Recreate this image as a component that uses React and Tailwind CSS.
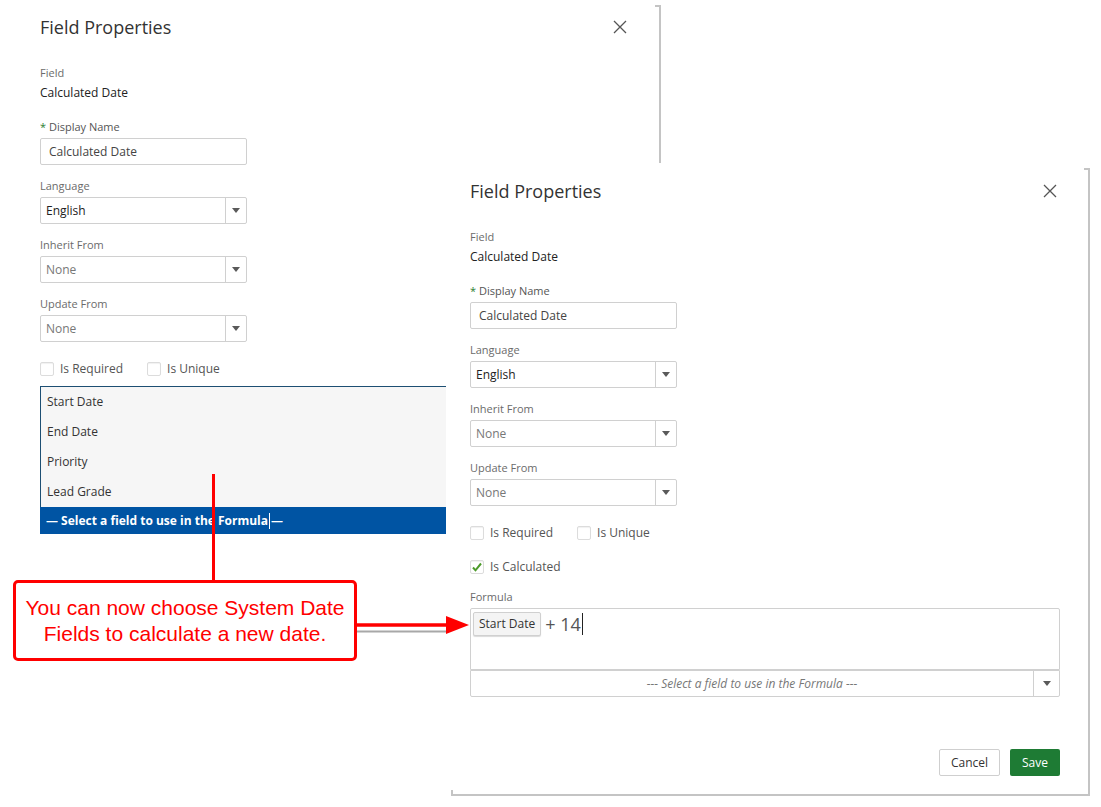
import React from "react";

/* ---------- small drawings ---------- */
const Caret = () => (
  <svg width="8" height="5" viewBox="0 0 8 5">
    <path d="M0 0h8L4 5z" fill="#5a5a5a" />
  </svg>
);

const CloseX = () => (
  <svg width="14" height="14" viewBox="0 0 14 14">
    <path d="M1 1l12 12M13 1L1 13" stroke="#555" strokeWidth="1.3" fill="none" />
  </svg>
);

const Tick = () => (
  <svg width="12" height="12" viewBox="0 0 12 12">
    <path d="M2 6.5l2.5 2.8L10 2.5" stroke="#4c9a2a" strokeWidth="2" fill="none" />
  </svg>
);

/* ---------- form pieces ---------- */
const Label = ({ children, className = "" }) => (
  <div className={`text-[11px] leading-4 text-[#6b6b6b] ${className}`}>{children}</div>
);

const Select = ({ value, muted }) => (
  <div className="mt-[3px] flex h-[27px] w-[207px] rounded-[2px] border border-[#d0d0d0] bg-white">
    <div className={`flex flex-1 items-center pl-[5px] text-[12px] ${muted ? "text-[#777]" : "text-[#222]"}`}>
      {value}
    </div>
    <div className="flex w-[21px] items-center justify-center border-l border-[#d0d0d0]">
      <Caret />
    </div>
  </div>
);

const Check = ({ label, checked, className = "" }) => (
  <div className={`flex h-[18px] items-center ${className}`}>
    <span className="flex h-[14px] w-[14px] items-center justify-center rounded-[2px] border border-[#dcdcdc] bg-white shadow-[inset_0_1px_1px_rgba(0,0,0,0.06)]">
      {checked && <Tick />}
    </span>
    <span className="ml-[6px] text-[12px] text-[#555]">{label}</span>
  </div>
);

/* shared top part of both panels */
const FormTop = () => (
  <>
    <div className="flex w-[587px] items-center justify-between">
      <h2 className="text-[18px] leading-6 text-[#333]">Field Properties</h2>
      <CloseX />
    </div>

    <Label className="mt-[26px]">Field</Label>
    <div className="mt-[3px] text-[12px] leading-[18px] text-[#222]">Calculated Date</div>

    <Label className="mt-[17px] text-[#555]">
      <span className="text-[#2e7d32]">*</span> Display Name
    </Label>
    <div className="mt-[3px] flex h-[27px] w-[207px] items-center rounded-[2px] border border-[#d0d0d0] pl-[8px] text-[12px] text-[#444]">
      Calculated Date
    </div>

    <Label className="mt-[13px]">Language</Label>
    <Select value="English" />
    <Label className="mt-[13px]">Inherit From</Label>
    <Select value="None" muted />
    <Label className="mt-[13px]">Update From</Label>
    <Select value="None" muted />

    <div className="mt-[18px] flex gap-[24px]">
      <Check label="Is Required" />
      <Check label="Is Unique" />
    </div>
  </>
);

/* ---------- page ---------- */
export default function App() {
  return (
    <div className="relative h-[807px] w-[1101px] overflow-hidden bg-white font-['Open_Sans',sans-serif]">
      {/* first screenshot: field list open */}
      <div className="relative w-[661px] pl-[40px] pt-[15px]">
        <span className="absolute left-[659px] top-[5px] h-[158px] w-[2px] bg-[#c4c4c4]" />
        <span className="absolute left-[655px] top-[5px] h-[2px] w-[5px] bg-[#c4c4c4]" />

        <FormTop />

        <div className="mt-[8px] w-[440px] border-l border-t border-[#1d4f73] bg-[#f6f6f6]">
          {["Start Date", "End Date", "Priority", "Lead Grade"].map((f) => (
            <div key={f} className="flex h-[30px] items-center pl-[6px] text-[12px] text-[#333]">
              {f}
            </div>
          ))}
        </div>
        <div className="flex h-[27px] w-[440px] items-center bg-[#0054a3] pl-[6px] text-[12px] font-bold text-white">
          — Select a field to use in the Formula
          <span className="mx-[1px] inline-block h-[16px] w-[1px] bg-white" />—
        </div>
      </div>

      {/* second screenshot: formula filled in */}
      <div className="absolute left-[446px] top-[165px] h-[631px] w-[644px] bg-white pl-[24px] pt-[14px]">
        <span className="absolute right-0 top-[3px] h-[628px] w-[2px] bg-[#c4c4c4]" />
        <span className="absolute right-[2px] top-[3px] h-[2px] w-[4px] bg-[#c4c4c4]" />
        <span className="absolute bottom-0 left-[5px] right-0 h-[2px] bg-[#c4c4c4]" />
        <span className="absolute bottom-0 left-[5px] h-[6px] w-[2px] bg-[#c4c4c4]" />

        <FormTop />

        <Check label="Is Calculated" checked className="mt-[16px]" />

        <Label className="mt-[13px]">Formula</Label>
        <div className="mt-[3px] flex h-[62px] w-[590px] items-start rounded-t-[2px] border border-[#d0d0d0] pl-[2px] pt-[3px]">
          <span className="flex h-[24px] items-center rounded-[2px] border border-[#d0d0d0] bg-[#f4f4f4] px-[5px] text-[12px] text-[#333] shadow-[0_1px_1px_rgba(0,0,0,0.15)]">
            Start Date
          </span>
          <span className="ml-[4px] text-[18px] leading-6 text-[#555]">+ 14</span>
          <span className="ml-[1px] mt-[1px] h-[22px] w-[1px] bg-[#222]" />
        </div>
        <div className="flex h-[27px] w-[590px] rounded-b-[2px] border border-[#d0d0d0]">
          <div className="flex flex-1 items-center justify-center text-[12px] italic text-[#777]">
            --- Select a field to use in the Formula ---
          </div>
          <div className="flex w-[26px] items-center justify-center border-l border-[#d0d0d0]">
            <Caret />
          </div>
        </div>

        <div className="mt-[52px] flex w-[590px] justify-end gap-[10px]">
          <button className="h-[27px] w-[61px] rounded-[2px] border border-[#cfcfcf] bg-white text-[12px] text-[#333]">
            Cancel
          </button>
          <button className="h-[27px] w-[50px] rounded-[2px] bg-[#1e7b34] text-[12px] text-white">
            Save
          </button>
        </div>
      </div>

      {/* annotation */}
      <span className="absolute left-[212px] top-[474px] h-[107px] w-[3px] bg-[#ff0000]" />
      <div className="absolute left-[13px] top-[580px] flex h-[81px] w-[344px] flex-col items-center justify-center rounded-[5px] border-[3px] border-[#ff0000] bg-white font-['Liberation_Sans',Arial,sans-serif] text-[21px] leading-[26px] text-[#ff0000]">
        <div>You can now choose System Date</div>
        <div>Fields to calculate a new date.</div>
      </div>
      <svg className="absolute left-[356px] top-[610px]" width="116" height="28" viewBox="0 0 116 28">
        <path d="M1 21.5H91" stroke="#a8a8a8" strokeWidth="2" />
        <path d="M0 15H92" stroke="#ff0000" strokeWidth="3.5" />
        <path d="M90 6L113 15L90 24z" fill="#ff0000" />
      </svg>
    </div>
  );
}
